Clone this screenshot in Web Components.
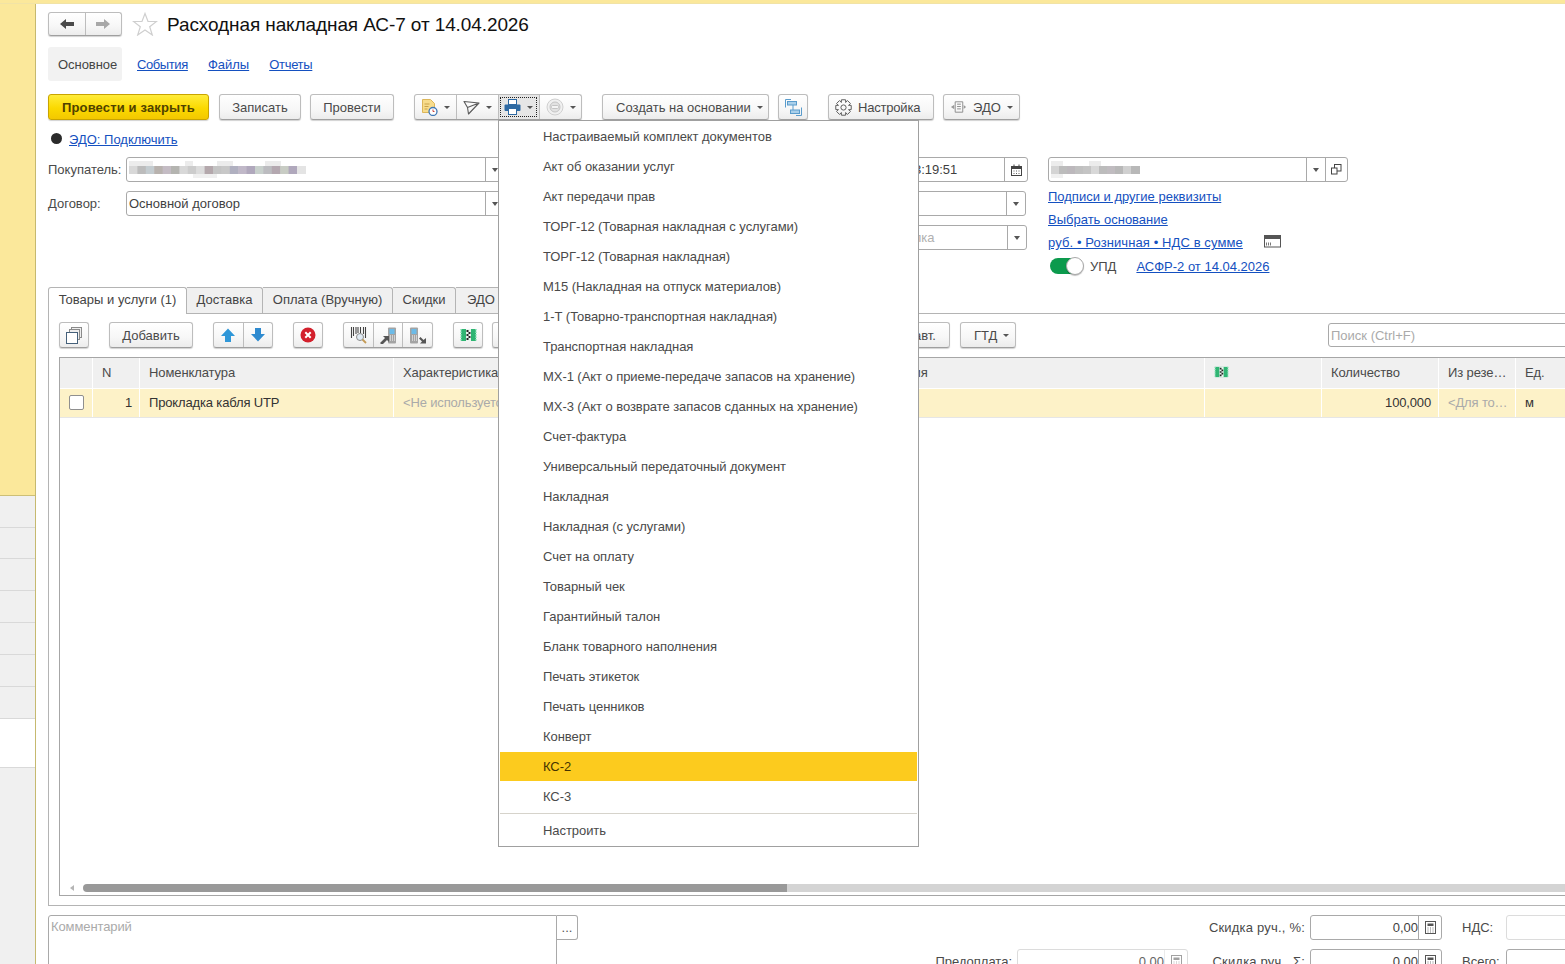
<!DOCTYPE html>
<html lang="ru"><head><meta charset="utf-8"><title>Расходная накладная</title>
<style>
html,body{margin:0;padding:0;height:100%;overflow:hidden;background:#fff}
body{font:13px "Liberation Sans",Arial,sans-serif;color:#4a4a4a}
</style></head><body>
<app-shell>
  <side-rail slot="rail"></side-rail>

  <flow-row style="height:24px;margin-top:8px">
    <btn-group style="width:74px;height:24px"><tool-btn seg><svg-icon name="left" w="16" h="12"></svg-icon></tool-btn><tool-btn seg><svg-icon name="right" w="16" h="12"></svg-icon></tool-btn></btn-group>
    <svg-icon name="star" w="26" h="24" style="margin-left:10px"></svg-icon>
    <doc-title style="margin-left:9px">Расходная накладная АС-7 от 14.04.2026</doc-title>
  </flow-row>

  <flow-row style="height:34px;margin-top:11px">
    <sect-tab active style="width:74px">Основное</sect-tab>
    <link-text style="margin-left:15px;letter-spacing:-.4px">События</link-text>
    <link-text style="margin-left:20px">Файлы</link-text>
    <link-text style="margin-left:20px;letter-spacing:-.3px">Отчеты</link-text>
  </flow-row>

  <flow-row style="height:26px;margin-top:13px">
    <tool-btn primary style="width:161px">Провести и закрыть</tool-btn>
    <tool-btn style="width:82px;margin-left:10px">Записать</tool-btn>
    <tool-btn style="width:84px;margin-left:9px">Провести</tool-btn>
    <btn-group style="width:168px;height:26px;margin-left:20px">
      <tool-btn seg style="width:42px"><svg-icon name="doc" w="17" h="17"></svg-icon><drop-caret></drop-caret></tool-btn>
      <tool-btn seg style="width:42px"><svg-icon name="plane" w="17" h="15"></svg-icon><drop-caret></drop-caret></tool-btn>
      <tool-btn seg focus style="width:42px"><svg-icon name="print" w="17" h="16"></svg-icon><drop-caret></drop-caret></tool-btn>
      <tool-btn seg style="width:42px"><svg-icon name="off" w="18" h="18"></svg-icon><drop-caret></drop-caret></tool-btn>
    </btn-group>
    <tool-btn style="width:167px;margin-left:20px;justify-content:flex-start;padding-left:13px">Создать на основании<drop-caret></drop-caret></tool-btn>
    <tool-btn style="width:30px;margin-left:9px"><svg-icon name="struct" w="17" h="17"></svg-icon></tool-btn>
    <tool-btn style="width:106px;margin-left:20px;justify-content:flex-start;padding-left:6px;letter-spacing:-.2px"><svg-icon name="gear" w="17" h="17" style="margin-right:6px"></svg-icon>Настройка</tool-btn>
    <tool-btn style="width:77px;margin-left:9px"><svg-icon name="edo" w="17" h="16" style="margin-right:6px"></svg-icon>ЭДО<drop-caret></drop-caret></tool-btn>
  </flow-row>

  <flow-row style="height:19px;margin-top:10px;padding-left:3px">
    <status-dot></status-dot>
    <link-text style="margin-left:7px">ЭДО: Подключить</link-text>
  </flow-row>

  <form-block>
    <flow-row slot="left" style="height:25px">
      <field-label style="width:78px">Покупатель:</field-label>
      <text-field btns="drop" style="width:379px"><blur-patch kind="a"></blur-patch></text-field>
      <text-field btns="cal" style="width:193px;margin-left:auto">14.04.2026 13:19:51</text-field>
    </flow-row>
    <flow-row slot="left" style="height:25px;margin-top:9px">
      <field-label style="width:78px">Договор:</field-label>
      <text-field btns="drop" style="width:379px">Основной договор</text-field>
      <text-field btns="drop" style="width:320px;margin-left:auto;margin-right:2px"></text-field>
    </flow-row>
    <flow-row slot="left" style="height:25px;margin-top:9px">
      <text-field btns="drop" style="width:140px;margin-left:auto;margin-right:1px"><span style="color:#b0b0b0">Сделка</span></text-field>
    </flow-row>

    <text-field slot="right" btns="drop,copy" style="width:300px;height:25px"><blur-patch kind="b"></blur-patch></text-field>
    <flow-row slot="right" style="height:23px;margin-top:3px"><link-text>Подписи и другие реквизиты</link-text></flow-row>
    <flow-row slot="right" style="height:23px"><link-text>Выбрать основание</link-text></flow-row>
    <flow-row slot="right" style="height:23px"><link-text style="letter-spacing:.1px">руб. • Розничная • НДС в сумме</link-text><svg-icon name="card" w="17" h="13" style="margin-left:21px;margin-top:-3px"></svg-icon></flow-row>
    <flow-row slot="right" style="height:24px;padding-left:2px"><toggle-switch></toggle-switch><span style="margin-left:6px">УПД</span><link-text style="margin-left:20px">АСФР-2 от 14.04.2026</link-text></flow-row>
  </form-block>

  <flow-row style="height:26px;align-items:flex-start">
    <page-tab active style="width:139px">Товары и услуги (1)</page-tab>
    <page-tab style="width:76px">Доставка</page-tab>
    <page-tab style="width:130px">Оплата (Вручную)</page-tab>
    <page-tab style="width:63px">Скидки</page-tab>
    <page-tab style="width:60px;justify-content:flex-start;padding-left:11px">ЭДО</page-tab>
  </flow-row>

  <tab-panel>
    <flow-row style="height:26px">
      <tool-btn style="width:30px"><svg-icon name="layers" w="18" h="18"></svg-icon></tool-btn>
      <tool-btn style="width:84px;margin-left:20px">Добавить</tool-btn>
      <btn-group style="width:60px;height:26px;margin-left:20px">
        <tool-btn seg style="width:30px"><svg-icon name="up" w="14" h="14"></svg-icon></tool-btn>
        <tool-btn seg style="width:30px"><svg-icon name="down" w="14" h="14"></svg-icon></tool-btn>
      </btn-group>
      <tool-btn style="width:30px;margin-left:20px"><svg-icon name="cancel" w="16" h="16"></svg-icon></tool-btn>
      <btn-group style="width:90px;height:26px;margin-left:20px">
        <tool-btn seg style="width:30px"><svg-icon name="barcode" w="17" h="17"></svg-icon></tool-btn>
        <tool-btn seg style="width:30px"><svg-icon name="scanin" w="18" h="17"></svg-icon></tool-btn>
        <tool-btn seg style="width:30px"><svg-icon name="scanout" w="18" h="17"></svg-icon></tool-btn>
      </btn-group>
      <tool-btn style="width:30px;margin-left:20px"><svg-icon name="mark" w="17" h="14"></svg-icon></tool-btn>
      <tool-btn style="width:70px;margin-left:9px">Цены</tool-btn>
      <tool-btn style="width:100px;margin-left:auto;justify-content:flex-end;padding-right:13px">Заполнить авт.</tool-btn>
      <tool-btn style="width:56px;margin-left:10px;justify-content:flex-start;padding-left:13px">ГТД<drop-caret></drop-caret></tool-btn>
      <text-field style="width:319px;margin-left:312px;height:24px"><span style="color:#aaa">Поиск (Ctrl+F)</span></text-field>
    </flow-row>

    <data-table>
      <table-row head>
        <table-cell></table-cell>
        <table-cell>N</table-cell>
        <table-cell>Номенклатура</table-cell>
        <table-cell>Характеристика</table-cell>
        <table-cell>Серия</table-cell>
        <table-cell><svg-icon name="mark" w="15" h="12"></svg-icon></table-cell>
        <table-cell>Количество</table-cell>
        <table-cell tight>Из резе…</table-cell>
        <table-cell>Ед.</table-cell>
      </table-row>
      <table-row>
        <table-cell center><check-box></check-box></table-cell>
        <table-cell end>1</table-cell>
        <table-cell>Прокладка кабля UTP</table-cell>
        <table-cell hint>&lt;Не используется&gt;</table-cell>
        <table-cell></table-cell>
        <table-cell></table-cell>
        <table-cell end>100,000</table-cell>
        <table-cell hint tight>&lt;Для то…</table-cell>
        <table-cell>м</table-cell>
      </table-row>
    </data-table>
  </tab-panel>

  <bottom-form>
    <comment-box slot="comment">Комментарий</comment-box>
    <span></span><span></span>
    <field-label end wide>Скидка руч., %:</field-label>
    <text-field btns="calc" num>0,00</text-field>
    <field-label pad>НДС:</field-label>
    <text-field muted></text-field>
    <field-label end>Предоплата:</field-label>
    <text-field btns="calc" num muted>0,00</text-field>
    <field-label end wide>Скидка руч., Σ:</field-label>
    <text-field btns="calc" num>0,00</text-field>
    <field-label pad>Всего:</field-label>
    <text-field></text-field>
  </bottom-form>

  <popup-menu slot="overlay">
    <menu-item>Настраиваемый комплект документов</menu-item>
    <menu-item>Акт об оказании услуг</menu-item>
    <menu-item>Акт передачи прав</menu-item>
    <menu-item>ТОРГ-12 (Товарная накладная с услугами)</menu-item>
    <menu-item>ТОРГ-12 (Товарная накладная)</menu-item>
    <menu-item>М15 (Накладная на отпуск материалов)</menu-item>
    <menu-item>1-Т (Товарно-транспортная накладная)</menu-item>
    <menu-item>Транспортная накладная</menu-item>
    <menu-item>МХ-1 (Акт о приеме-передаче запасов на хранение)</menu-item>
    <menu-item>МХ-3 (Акт о возврате запасов сданных на хранение)</menu-item>
    <menu-item>Счет-фактура</menu-item>
    <menu-item>Универсальный передаточный документ</menu-item>
    <menu-item>Накладная</menu-item>
    <menu-item>Накладная (с услугами)</menu-item>
    <menu-item>Счет на оплату</menu-item>
    <menu-item>Товарный чек</menu-item>
    <menu-item>Гарантийный талон</menu-item>
    <menu-item>Бланк товарного наполнения</menu-item>
    <menu-item>Печать этикеток</menu-item>
    <menu-item>Печать ценников</menu-item>
    <menu-item>Конверт</menu-item>
    <menu-item active>КС-2</menu-item>
    <menu-item>КС-3</menu-item>
    <menu-sep></menu-sep>
    <menu-item>Настроить</menu-item>
  </popup-menu>
</app-shell>

<script>
function def(name, css, html, extra){
  const c = class extends HTMLElement{
    constructor(){super();this.attachShadow({mode:'open'}).innerHTML='<style>'+css+'</style>'+(html||'<slot></slot>');}
    connectedCallback(){ if(extra) extra(this,this.shadowRoot); }
  };
  customElements.define(name,c);
}
const gearPath=(()=>{let d='',cx=8.5,cy=8.5,n=8;
  for(let i=0;i<n;i++){const a=i/n*Math.PI*2;
    const pts=[[5.6,-.42],[8,-.26],[8,.26],[5.6,.42]];
    pts.forEach((p,j)=>{const x=cx+p[0]*Math.cos(a+p[1]),y=cy+p[0]*Math.sin(a+p[1]);d+=((i==0&&j==0)?'M':'L')+x.toFixed(2)+' '+y.toFixed(2);});}
  return d+'Z';})();
const ICONS={
 left:'<path d="M1 6 7 1v3h8v4H7v3z" fill="#4a4a4a"/>',
 right:'<path d="M15 6 9 1v3H1v4h8v3z" fill="#a8a8a8"/>',
 star:'<path d="M13 1.500l3 8h8.500l-6.800 5.200 2.600 8.300-7.300-5-7.300 5 2.600-8.300L1.500 9.500H10z" fill="#fff" stroke="#cfcfcf" stroke-width="1.200"/>',
 doc:'<path d="M1.500.5h8l4 4v9h-12z" fill="#f7dc8c" stroke="#dcb65a"/><path d="M3.500 5h5M3.500 7.500h4M3.500 10h3" stroke="#c9a24a"/><circle cx="12" cy="12.500" r="4" fill="#fff" stroke="#3f77b5" stroke-width="1.300"/><path d="M12 10.500v2h1.500" stroke="#c8453f" fill="none"/>',
 plane:'<path d="M1 1.500 16 3 5.500 14 4.500 7.500zM4.500 7.500 16 3" fill="none" stroke="#5a5a5a" stroke-width="1.100" stroke-linejoin="round"/>',
 print:'<rect x="4.500" y=".5" width="8" height="5" fill="#fff" stroke="#2e6aa3"/><rect x=".5" y="5.500" width="16" height="6.500" rx="1" fill="#2e6aa3"/><rect x="4.500" y="9.500" width="8" height="6" fill="#fff" stroke="#2e6aa3"/>',
 off:'<circle cx="9" cy="9" r="8" fill="#f0f0f0" stroke="#cfcfcf"/><circle cx="9" cy="9" r="5" fill="#e2e2e2" stroke="#c4c4c4"/><rect x="5.500" y="7.500" width="7" height="3" rx="1" fill="#f4f4f4" stroke="#c4c4c4"/>',
 struct:'<path d="M6 .5H.5v8M11 16.500h5.500v-8" fill="none" stroke="#5a9ccc"/><rect x="2.500" y="2.500" width="9" height="3.500" fill="#a9cfea" stroke="#5a9ccc"/><rect x="5.500" y="11" width="9" height="3.500" fill="#a9cfea" stroke="#5a9ccc"/><path d="M8 6v5" stroke="#5a9ccc"/>',
 gear:'<path d="'+gearPath+'" fill="none" stroke="#5e5e5e"/><circle cx="8.500" cy="8.500" r="2.600" fill="none" stroke="#5e5e5e"/>',
 edo:'<path d="M5.500 2.500h8v11h-8zM7.500 5h4M7.500 7.500h4M7.500 10h4" fill="none" stroke="#8a8a8a"/><path d="M4.500 5.500 1 8l3.500 2.500zM14.500 6l2.500 2-2.500 2z" fill="#9a9a9a"/>',
 cal:'<rect x=".5" y="2.500" width="10" height="9" fill="#fff" stroke="#444"/><rect x=".5" y="2.500" width="10" height="2.500" fill="#444"/><path d="M3 .5v2M8 .5v2" stroke="#444"/><path d="M2.500 7h1M5 7h1M7.500 7h1M2.500 9.500h1M5 9.500h1M7.500 9.500h1" stroke="#666"/>',
 copy:'<rect x="3.500" y=".5" width="6.500" height="6.500" fill="#fff" stroke="#444"/><rect x=".5" y="4" width="5.500" height="6" fill="#fff" stroke="#444"/>',
 calc:'<rect x=".5" y=".5" width="10" height="12" fill="#fff" stroke="#555"/><rect x="2.500" y="2.500" width="6" height="2.500" fill="#555"/><path d="M2.500 7h1M5 7h1M7.500 7h1M2.500 9h1M5 9h1M7.500 9h1M2.500 11h1M5 11h1M7.500 11h1" stroke="#777"/>',
 card:'<rect x=".5" y=".5" width="16" height="11.500" fill="#fff" stroke="#555"/><rect x="1" y="1" width="15" height="3" fill="#555"/><path d="M2.500 7.500v3M4.500 7.500v3M6.500 7.500v3" stroke="#777"/>',
 layers:'<rect x="6.500" y="1.500" width="10" height="10" fill="#eee" stroke="#8a8a8a"/><rect x="4.500" y="3.500" width="10" height="10" fill="#eee" stroke="#8a8a8a"/><rect x="1.500" y="6.500" width="11" height="11" fill="#fff" stroke="#44607a"/>',
 up:'<path d="M7 .5 14 8H10v6H4V8H0z" fill="#2f97d8"/>',
 down:'<path d="M7 13.500 14 6H10V0H4v6H0z" fill="#2f8bd0"/>',
 cancel:'<circle cx="8" cy="8" r="7.500" fill="#d3202c"/><path d="M5.300 5.300l5.400 5.400M10.700 5.300l-5.400 5.400" stroke="#fff" stroke-width="2"/>',
 barcode:'<path d="M1.500 0v11M3.500 0v9M6 0v7M8 0v6M10.500 0v6M13.500 0v7M15.500 0v11" stroke="#444" stroke-width="1.100"/><circle cx="10" cy="10" r="3.500" fill="#dfeaf3" stroke="#8a8a8a"/><path d="M12.500 12.500l3.500 3.500" stroke="#c49a55" stroke-width="1.800"/>',
 scanin:'<rect x="9" y=".5" width="8" height="16" rx="1" fill="#a3a3a3"/><rect x="10.500" y="2" width="5" height="5" fill="#6cbbe8"/><path d="M11 9h1M13 9h1M15 9h1M11 11h1M13 11h1M15 11h1M11 13h1M13 13h1M15 13h1" stroke="#fff"/><path d="M1 16l5-5-2-2h6v6l-2-2-5 5z" fill="#555"/>',
 scanout:'<rect x="1" y=".5" width="8" height="16" rx="1" fill="#a3a3a3"/><rect x="2.500" y="2" width="5" height="5" fill="#6cbbe8"/><path d="M3 9h1M5 9h1M7 9h1M3 11h1M5 11h1M7 11h1M3 13h1M5 13h1M7 13h1" stroke="#fff"/><path d="M17 16.500h-6l2-2-3-3 1.500-1.500 3 3 2.500-2z" fill="#555"/>',
 mark:'<rect x="1" y="1" width="15" height="12" fill="#2fb573"/><path d="M1 1v12M16 1v12" stroke="#8fe0b8" stroke-width="1.500" stroke-dasharray="1.500 1"/><rect x="6" y="1" width="5" height="12" fill="#e8f5ee"/><path d="M6.500 2h2v2h-2zM8.500 4h2v2h-2zM6.500 6h2v2h-2zM8.500 8h2v2h-2zM6.500 10h2v2h-2z" fill="#222"/>'
};
const VB={left:'0 0 16 12',right:'0 0 16 12',star:'0 0 26 24',doc:'0 0 17 17',plane:'0 0 17 15',print:'0 0 17 16',off:'0 0 18 18',struct:'0 0 17 17',gear:'0 0 17 17',edo:'0 0 18 16',cal:'0 0 11 12',copy:'0 0 11 11',calc:'0 0 11 13',card:'0 0 17 13',layers:'0 0 18 18',up:'0 0 14 14',down:'0 0 14 14',cancel:'0 0 16 16',barcode:'0 0 17 17',scanin:'0 0 18 17',scanout:'0 0 18 17',mark:'0 0 17 14'};
const BTN={
 drop:{w:19,html:'<i style="display:block;width:0;height:0;border:3px solid transparent;border-top:4px solid #555;border-bottom:0"></i>'},
 cal:{w:23,icon:['cal',11,12]},
 copy:{w:22,icon:['copy',11,11]},
 calc:{w:23,icon:['calc',11,13]}
};

def('app-shell',`:host{display:block;position:relative;width:1565px;height:964px;overflow:hidden;background:#fff}
 .strip{height:3px;background:#fbe89b;border-bottom:1px solid #f1e3a6}
 .body{display:flex;height:960px}
 main{flex:1;min-width:0;padding-left:12px;overflow:hidden}`,
 `<div class="strip"></div><div class="body"><slot name="rail"></slot><main><slot></slot></main></div><slot name="overlay"></slot>`);

def('side-rail',`:host{display:flex;flex-direction:column;width:35px;flex:none;border-right:1px solid #c6b96f;background:#f0f0f0}
 .y{height:491px;background:#fbe89b;border-bottom:1px solid #cdbf76}
 .r{border-bottom:1px solid #d9d9d9}.w{background:#fff}`,
 `<div class="y"></div><div class="r" style="height:31px"></div><div class="r" style="height:30px"></div><div class="r" style="height:31px"></div><div class="r" style="height:31px"></div><div class="r" style="height:31px"></div><div class="r" style="height:31px"></div><div class="r" style="height:31px"></div><div class="r w" style="height:48px"></div>`);

def('flow-row',`:host{display:flex;align-items:center;box-sizing:border-box;white-space:nowrap}`);
def('doc-title',`:host{display:block;font-size:19px;letter-spacing:-.1px;color:#111;white-space:nowrap;padding-top:1px}`);
def('sect-tab',`:host{display:flex;align-items:center;box-sizing:border-box;padding-left:10px;height:34px;border-radius:3px;color:#444;letter-spacing:-.05px}
 :host([active]){background:#f2f2f2}`);
def('link-text',`:host{display:inline-block;color:#1450c0;text-decoration:underline;white-space:nowrap}`);
def('status-dot',`:host{display:block;width:11px;height:11px;border-radius:50%;background:#2b2b2b;margin-top:-2px}`);
def('drop-caret',`:host{display:block;width:0;height:0;border:3px solid transparent;border-top:3px solid #555;border-bottom:0;margin-left:6px;flex:none}`);

def('tool-btn',`:host{display:flex;align-items:center;justify-content:center;box-sizing:border-box;height:26px;flex:none;white-space:nowrap;color:#4a4a4a;
   background:linear-gradient(#fff,#f7f7f7 60%,#ececec);border:1px solid #bdbdbd;border-bottom-color:#9f9f9f;border-radius:3px;box-shadow:0 1px 1px rgba(0,0,0,.18)}
 :host([primary]){background:linear-gradient(#ffec3a,#fbd900 55%,#f3c800);border-color:#c9a400;font-weight:bold;color:#4f4200;letter-spacing:.15px}
 :host([seg]){border:0;border-left:1px solid #bdbdbd;border-radius:0;box-shadow:none;background:none;height:100%;flex:1}
 :host([seg]:first-child){border-left:0}
 :host([focus]){background:#e6e6e6;outline:1px dotted #222;outline-offset:-3px}`);
def('btn-group',`:host{display:flex;box-sizing:border-box;flex:none;background:linear-gradient(#fff,#f7f7f7 60%,#ececec);border:1px solid #bdbdbd;border-bottom-color:#9f9f9f;border-radius:3px;box-shadow:0 1px 1px rgba(0,0,0,.18);overflow:hidden}`);

def('svg-icon',`:host{display:inline-flex;flex:none}svg{display:block}`,'<span></span>',(el,root)=>{
  const n=el.getAttribute('name'),w=el.getAttribute('w'),h=el.getAttribute('h');
  root.querySelector('span').innerHTML='<svg xmlns="http://www.w3.org/2000/svg" width="'+w+'" height="'+h+'" viewBox="'+VB[n]+'">'+ICONS[n]+'</svg>';
});

def('field-label',`:host{display:flex;align-items:center;flex:none;white-space:nowrap;color:#4a4a4a;height:25px}
 :host([end]){justify-content:flex-end;padding-right:5px}
 :host([wide]){letter-spacing:.2px}
 :host([pad]){padding-left:20px}`);
def('text-field',`:host{display:flex;box-sizing:border-box;height:25px;flex:none;background:#fff;border:1px solid #a9a9a9;border-radius:3px;color:#3f3f3f;min-width:0}
 :host([muted]){border-color:#dcdcdc;color:#666}
 .t{flex:1;display:flex;align-items:center;padding:0 2px;min-width:0;overflow:hidden;white-space:nowrap}
 :host([num]) .t{justify-content:flex-end;padding-right:0}
 .b{display:flex;align-items:center;justify-content:center;flex:none;border-left:1px solid #a9a9a9;box-sizing:border-box}
 :host([muted]) .b{border-color:#dcdcdc;opacity:.55}`,
 `<div class="t"><slot></slot></div><span id="bs" style="display:contents"></span>`,(el,root)=>{
  const v=(el.getAttribute('btns')||'').split(',').filter(Boolean),bs=root.getElementById('bs');
  v.forEach(k=>{const b=BTN[k],d=document.createElement('div');d.className='b';d.style.width=b.w+'px';
    d.innerHTML=b.html||('<svg-icon name="'+b.icon[0]+'" w="'+b.icon[1]+'" h="'+b.icon[2]+'"></svg-icon>');bs.appendChild(d);});
});
def('blur-patch',`:host{display:block}svg{display:block}`,'<span></span>',(el,root)=>{
  const a=el.getAttribute('kind')==='a';
  const tones=a?['#d8d8d8','#bcbcbc','#c4ccd0','#b8b2ae','#c4bcc4','#b4b4b0','#d8d8d8','#cccccc','#dcdcdc','#b4a8ac','#c4c4c4','#c8c8c8','#b0b0c0','#c0b8c8','#b0a8bc','#c8d0cc','#bcbcc0','#b4a8b0','#c8ccc4','#b0a8bc','#e4e4e4']
    :['#d4d4d4','#bcbcbc','#bcb8bc','#c0c0c0','#c4c4c4','#d8d8d8','#bcbcbc','#c0bcc0','#b8b8b8','#d0d0d0','#b8b8b8'];
  const up=a?[[0,24],[56,8],[88,16],[136,16]]:[[0,12],[38,12]];
  const low=a?[[64,24]]:[[0,12]];
  let s='';tones.forEach((c,i)=>s+='<rect x="'+(i*(a?8.4:8))+'" y="5" width="9" height="8" fill="'+c+'"/>');
  up.forEach(r=>s+='<rect x="'+r[0]+'" y="0" width="'+r[1]+'" height="5" fill="#ececec"/>');
  low.forEach(r=>s+='<rect x="'+r[0]+'" y="13" width="'+r[1]+'" height="4" fill="#f0f0f0"/>');
  root.querySelector('span').innerHTML='<svg width="180" height="18">'+s+'</svg>';
});

def('form-block',`:host{display:flex;height:130px;margin-top:8px;gap:20px;align-items:flex-start}
 .l{width:980px;flex:none}.r{flex:1}`,
 `<div class="l"><slot name="left"></slot></div><div class="r"><slot name="right"></slot></div>`);
def('toggle-switch',`:host{display:flex;align-items:center;width:34px;height:20px;flex:none}
 .track{width:22px;height:16px;background:#0c9a4d;border-radius:8px 0 0 8px}
 .knob{box-sizing:border-box;width:18px;height:18px;margin-left:-6px;border-radius:50%;background:#fff;border:1px solid #a8a8a8;box-shadow:0 1px 1px rgba(0,0,0,.25)}`,
 `<div class="track"></div><div class="knob"></div>`);

def('page-tab',`:host{display:flex;align-items:center;justify-content:center;box-sizing:border-box;height:26px;padding-bottom:2px;flex:none;white-space:nowrap;background:#f0f0f0;border:1px solid #b4b4b4;border-left:0;border-bottom:0;border-radius:0 3px 0 0;color:#444}
 :host([active]){background:#fff;border-left:1px solid #b4b4b4;border-radius:3px 3px 0 0;height:27px;padding-bottom:3px;position:relative;z-index:1}`);
def('tab-panel',`:host{display:block;box-sizing:border-box;width:1600px;height:593px;border:1px solid #b4b4b4;padding:8px 0 0 10px;background:#fff}`);
def('data-table',`:host{display:flex;flex-direction:column;box-sizing:border-box;height:539px;margin-top:9px;border:1px solid #a6a6a6}
 .b{flex:1}.s{display:flex;align-items:center;height:8px;margin-bottom:3px}
 .a{width:0;height:0;border:3px solid transparent;border-right:4px solid #b5b5b5;border-left:0;margin-left:10px;margin-right:9px}
 .th{width:704px;height:8px;background:#999;border-radius:4px 0 0 4px}.tr{flex:1;height:8px;background:#d4d4d4}`,
 `<slot></slot><div class="b"></div><div class="s"><div class="a"></div><div class="th"></div><div class="tr"></div></div>`);
def('table-row',`:host{display:grid;grid-template-columns:33px 47px 254px 487px 324px 117px 117px 77px 120px;height:28px;line-height:28px;background:#fdf2c8;border-bottom:1px solid #e6e6e6;color:#333;letter-spacing:-.15px}
 :host([head]){height:30px;line-height:29px;background:#f0f0f0;border-bottom:1px solid #fff;color:#4a4a4a;letter-spacing:-.1px}`);
def('table-cell',`:host{display:block;box-sizing:border-box;padding:0 9px;border-right:1px solid #fff;min-width:0;overflow:hidden;white-space:nowrap}
 :host([end]){text-align:right;padding-right:7px}
 :host([center]){display:flex;align-items:center;justify-content:center;padding:0 0 1px}
 :host([hint]){color:#aaa}
 :host([tight]){padding-right:0}
 ::slotted(svg-icon){margin-top:8px}`);
def('check-box',`:host{display:block;box-sizing:border-box;width:15px;height:15px;background:#fff;border:1px solid #8f8f8f;border-radius:2px}`);

def('bottom-form',`:host{display:flex;margin-top:9px}
 .c{width:530px;flex:none}
 .g{display:grid;grid-template-columns:434px 171px 122px 132px 64px 100px;row-gap:9px;margin-left:5px;align-content:start}`,
 `<div class="c"><slot name="comment"></slot></div><div class="g"><slot></slot></div>`);
def('comment-box',`:host{display:flex;align-items:flex-start}
 .a{box-sizing:border-box;width:509px;height:70px;border:1px solid #a9a9a9;border-radius:3px 0 0 0;padding:3px 2px;color:#aaa;letter-spacing:-.1px}
 .b{box-sizing:border-box;width:21px;height:25px;border:1px solid #a9a9a9;border-left:0;border-radius:0 3px 3px 0;display:flex;align-items:center;justify-content:center;color:#555}`,
 `<div class="a"><slot></slot></div><div class="b">...</div>`);

def('popup-menu',`:host{display:block;position:absolute;left:498px;top:120px;box-sizing:border-box;width:421px;height:727px;padding:0 1px;background:#fff;border:1px solid #a0a0a0;z-index:5;letter-spacing:-.06px}`);
def('menu-item',`:host{display:flex;align-items:center;height:30px;padding-left:43px;color:#4a4a4a;white-space:nowrap}
 :host([active]){background:#fccb1e;color:#443300;height:29px;margin-top:1px}`);
def('menu-sep',`:host{display:block;height:1px;background:#d6d3cb;margin:2px 0 1px}`);
</script>
</body></html>
